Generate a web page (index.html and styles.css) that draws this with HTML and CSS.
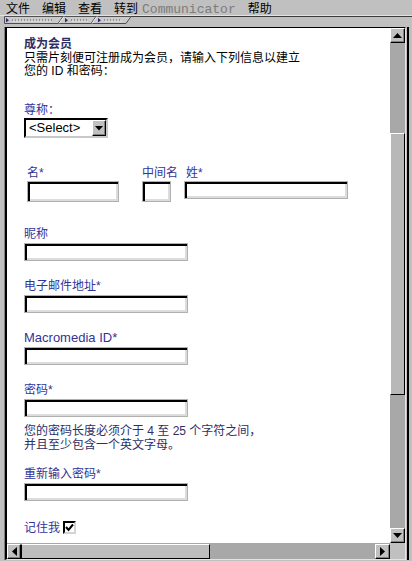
FILE: index.html
```html
<!DOCTYPE html>
<html lang="zh-CN">
<head>
<meta charset="utf-8">
<title>成为会员</title>
<link rel="stylesheet" href="styles.css">
</head>
<body>
<div class="menubar">
  <span class="menu">文件</span>
  <span class="menu">编辑</span>
  <span class="menu">查看</span>
  <span class="menu">转到</span>
  <span class="menu menu-comm">Communicator</span>
  <span class="menu">帮助</span>
</div>
<div class="tabstrip">
  <svg class="tabs-svg" width="412" height="12" viewBox="0 0 412 12">
    <line x1="0" y1="0.5" x2="412" y2="0.5" stroke="#e2e2e2"/>
    <line x1="130" y1="1.5" x2="412" y2="1.5" stroke="#3c3c3c"/>
    <path d="M4.5 8.5 V1.5 H131 L126 8.5 Z" fill="#cacaca" stroke="#505050"/>
    <line x1="58" y1="8.5" x2="63" y2="1.5" stroke="#505050"/>
    <line x1="91" y1="8.5" x2="96" y2="1.5" stroke="#505050"/>
    <line x1="59" y1="8.5" x2="64" y2="1.5" stroke="#f0f0f0"/>
    <line x1="92" y1="8.5" x2="97" y2="1.5" stroke="#f0f0f0"/>
    <polygon points="6,3 6,7.5 9,5.25" fill="#2a2a7a"/>
    <polygon points="65,3 65,7.5 68,5.25" fill="#2a2a7a"/>
    <polygon points="98,3 98,7.5 101,5.25" fill="#2a2a7a"/>
    <line x1="12" y1="5" x2="52" y2="5" stroke="#5a5a5a" stroke-dasharray="1 2"/>
    <line x1="13.5" y1="6.2" x2="52" y2="6.2" stroke="#ffffff" stroke-dasharray="1 2"/>
    <line x1="71" y1="5" x2="88" y2="5" stroke="#5a5a5a" stroke-dasharray="1 2"/>
    <line x1="72.5" y1="6.2" x2="88" y2="6.2" stroke="#ffffff" stroke-dasharray="1 2"/>
    <line x1="104" y1="5" x2="122" y2="5" stroke="#5a5a5a" stroke-dasharray="1 2"/>
    <line x1="105.5" y1="6.2" x2="122" y2="6.2" stroke="#ffffff" stroke-dasharray="1 2"/>
  </svg>
</div>
<div class="frame">
  <div class="frame-inner">
    <div class="viewport">
      <div class="page">
        <h1 class="title">成为会员</h1>
        <p class="intro">只需片刻便可注册成为会员，请输入下列信息以建立<br>您的 ID 和密码：</p>

        <div class="salutation">
          <span class="lbl">尊称：</span>
          <div class="select">
            <span class="select-text">&lt;Select&gt;</span>
            <span class="select-btn">
              <svg width="8" height="5" viewBox="0 0 8 5"><polygon points="0,0 8,0 4,4.5" fill="#000"/></svg>
            </span>
          </div>
        </div>

        <div class="name-row">
          <div class="ncol">
            <span class="lbl">名*</span>
            <input class="txt txt-first" type="text" aria-label="名">
          </div>
          <div class="ncol">
            <span class="lbl">中间名</span>
            <input class="txt txt-middle" type="text" aria-label="中间名">
          </div>
          <div class="ncol">
            <span class="lbl lbl-last">姓*</span>
            <input class="txt" type="text" aria-label="姓">
          </div>
        </div>

        <div class="field field-first">
          <span class="lbl">昵称</span>
          <input class="txt" type="text" aria-label="昵称">
        </div>
        <div class="field">
          <span class="lbl">电子邮件地址*</span>
          <input class="txt" type="text" aria-label="电子邮件地址">
        </div>
        <div class="field">
          <span class="lbl"><span class="latin">Macromedia ID*</span></span>
          <input class="txt" type="text" aria-label="Macromedia ID">
        </div>
        <div class="field">
          <span class="lbl">密码*</span>
          <input class="txt" type="password" aria-label="密码">
        </div>
        <p class="help">您的密码长度必须介于 4 至 25 个字符之间，<br>并且至少包含一个英文字母。</p>
        <div class="field field-retype">
          <span class="lbl">重新输入密码*</span>
          <input class="txt" type="password" aria-label="重新输入密码">
        </div>

        <div class="remember">
          <span class="lbl">记住我</span>
          <span class="check">
            <svg width="9" height="9" viewBox="0 0 9 9"><polyline points="1,4 3.5,7 8,1.5" fill="none" stroke="#000" stroke-width="2"/></svg>
          </span>
        </div>
      </div>
    </div>

    <div class="vscroll">
      <div class="sbtn sbtn-v">
        <svg width="9" height="5" viewBox="0 0 9 5"><polygon points="0,5 9,5 4.5,0" fill="#000"/></svg>
      </div>
      <div class="vtrack">
        <div class="vthumb"></div>
      </div>
      <div class="sbtn sbtn-v">
        <svg width="9" height="5" viewBox="0 0 9 5"><polygon points="0,0 9,0 4.5,5" fill="#000"/></svg>
      </div>
    </div>

    <div class="hscroll">
      <div class="sbtn sbtn-h sbtn-left">
        <svg width="5" height="9" viewBox="0 0 5 9"><polygon points="5,0 5,9 0,4.5" fill="#000"/></svg>
      </div>
      <div class="hthumb"></div>
      <div class="htrack"></div>
      <div class="sbtn sbtn-h sbtn-right">
        <svg width="5" height="9" viewBox="0 0 5 9"><polygon points="0,0 0,9 5,4.5" fill="#000"/></svg>
      </div>
    </div>

    <div class="corner"></div>
  </div>
</div>
</body>
</html>
```

FILE: styles.css
```css
* { box-sizing: border-box; }

html, body {
  margin: 0;
  padding: 0;
}

body {
  width: 412px;
  height: 561px;
  overflow: hidden;
  background: #c0c0c0;
  font-family: "Liberation Sans", "Noto Sans CJK SC", sans-serif;
  font-size: 12px;
  line-height: 12px;
  color: #000;
}

/* ---------- menu bar ---------- */
.menubar {
  height: 15px;
  display: flex;
  align-items: baseline;
  gap: 12px;
  padding: 3px 0 0 6px;
}

.menu {
  line-height: 12px;
  white-space: nowrap;
}

.menu-comm {
  font-family: "Liberation Mono", monospace;
  font-size: 13px;
  color: #7c7c7c;
  margin-left: -8px;
}

/* ---------- toolbar tab strip ---------- */
.tabstrip {
  height: 12px;
}

.tabs-svg {
  display: block;
}

/* ---------- browser frame ---------- */
.frame {
  margin-left: 4px;
  width: 405px;
  border-left: 1px solid #808080;
  border-right: 2px solid #000;
  padding-right: 1px;
}

.frame-inner {
  border-top: 1px solid #000;
  border-left: 2px solid #000;
  border-right: 1px solid #e4e4e4;
  border-bottom: 1px solid #e4e4e4;
  display: grid;
  grid-template-columns: 383px 15px;
  grid-template-rows: 515px 16px;
}

.viewport {
  background: #fff;
  overflow: hidden;
  padding: 10px 0 0 17px;
}

/* ---------- page content ---------- */
.title {
  margin: 0;
  font-size: 12px;
  line-height: 13.5px;
  font-weight: bold;
  color: #2e2e66;
}

.intro {
  margin: 0;
  line-height: 13.5px;
  color: #000;
}

.lbl {
  display: block;
  color: #333399;
  white-space: nowrap;
}

.latin {
  font-size: 13px;
}

.salutation {
  margin-top: 25.5px;
}

.select {
  margin-top: 2px;
  width: 84px;
  height: 20px;
  display: flex;
  align-items: center;
  border: 2px solid;
  border-color: #000 #c8c8c8 #c8c8c8 #000;
  background: #fff;
}

.select-text {
  flex: 1;
  padding-left: 3px;
  font-family: "Liberation Sans", sans-serif;
  font-size: 13px;
  line-height: 16px;
  color: #000;
}

.select-btn {
  width: 14px;
  height: 16px;
  display: flex;
  align-items: center;
  justify-content: center;
  background: #c0c0c0;
  border: 1px solid;
  border-color: #fff #000 #000 #fff;
  box-shadow: inset -1px -1px 0 #808080;
}

.select-btn svg {
  display: block;
}

.name-row {
  margin-top: 29px;
  margin-left: 3px;
  display: grid;
  grid-template-columns: 115px 42px auto;
  align-items: start;
}

.lbl-last {
  padding-left: 2px;
}

.txt {
  display: block;
  margin: 3px 0 0;
  padding: 0;
  width: 164px;
  height: 18px;
  border: 1px solid #b0b0b0;
  box-shadow: inset 2px 2px 0 #000, inset -2px -2px 0 #dcdcdc;
  background: #fff;
  outline: none;
  font: inherit;
  border-radius: 0;
}

.name-row .txt {
  margin-top: 2px;
}

.txt-first {
  width: 92px;
  height: 21px;
}

.txt-middle {
  width: 29px;
  height: 21px;
}

.field {
  margin-top: 19px;
}

.field-first {
  margin-top: 26px;
}

.help {
  margin: 8px 0 0;
  line-height: 13.5px;
  color: #2e2e66;
}

.field-retype {
  margin-top: 16px;
}

.remember {
  margin-top: 21px;
  display: flex;
  align-items: flex-start;
  gap: 3px;
}

.check {
  margin-top: -1px;
  width: 13px;
  height: 13px;
  display: flex;
  align-items: center;
  justify-content: center;
  border: 2px solid;
  border-color: #000 #d4d4d4 #d4d4d4 #000;
  background: #fff;
}

.check svg {
  display: block;
}

/* ---------- scrollbars ---------- */
.sbtn {
  display: flex;
  align-items: center;
  justify-content: center;
  background: #c0c0c0;
  border: 1px solid;
  border-color: #fff #000 #000 #fff;
  box-shadow: inset -1px -1px 0 #808080;
}

.sbtn svg {
  display: block;
}

.vscroll {
  display: flex;
  flex-direction: column;
  background: #a8a8a8;
}

.sbtn-v {
  height: 15px;
}

.vtrack {
  flex: 1;
  background: #a8a8a8;
}

.vthumb {
  margin-top: 90px;
  height: 262px;
  background: #b8b8b8;
  border: 1px solid;
  border-color: #fff #000 #000 #fff;
}

.hscroll {
  display: flex;
  background: #a8a8a8;
  padding-top: 1px;
}

.sbtn-h {
  height: 15px;
}

.sbtn-left {
  width: 14px;
}

.sbtn-right {
  width: 15px;
}

.hthumb {
  width: 189px;
  height: 15px;
  background: #bdbdbd;
  border: 1px solid;
  border-color: #fff #000 #000 #000;
}

.htrack {
  flex: 1;
  background: #a8a8a8;
}

.corner {
  background: #c0c0c0;
}
```
